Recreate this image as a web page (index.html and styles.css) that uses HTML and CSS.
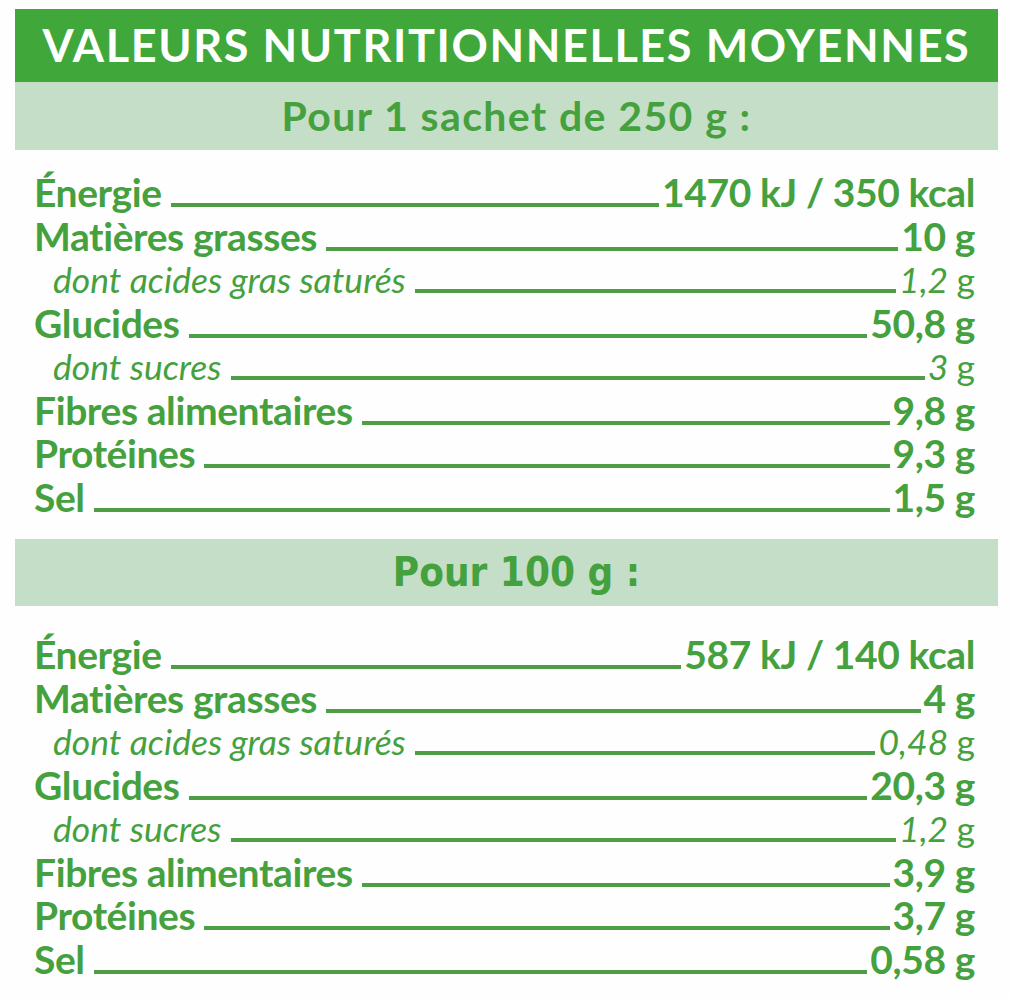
FILE: index.html
```html
<!DOCTYPE html>
<html lang="fr">
<head>
<meta charset="utf-8">
<title>Valeurs nutritionnelles moyennes</title>
<link rel="stylesheet" href="styles.css">
</head>
<body>
<div class="label">
  <div class="title">VALEURS NUTRITIONNELLES MOYENNES</div>
  <div class="band band-first">Pour 1 sachet de 250 g :</div>
  <div class="rows rows-first">
    <div class="row main"><span class="name">Énergie</span><span class="leader"></span><span class="val">1470 kJ / 350 kcal</span></div>
    <div class="row main"><span class="name">Matières grasses</span><span class="leader"></span><span class="val">10 g</span></div>
    <div class="row sub"><span class="name">dont acides gras saturés</span><span class="leader"></span><span class="val">1,2 <span class="u">g</span></span></div>
    <div class="row main"><span class="name">Glucides</span><span class="leader"></span><span class="val">50,8 g</span></div>
    <div class="row sub"><span class="name">dont sucres</span><span class="leader"></span><span class="val">3 <span class="u">g</span></span></div>
    <div class="row main"><span class="name">Fibres alimentaires</span><span class="leader"></span><span class="val">9,8 g</span></div>
    <div class="row main"><span class="name">Protéines</span><span class="leader"></span><span class="val">9,3 g</span></div>
    <div class="row main"><span class="name">Sel</span><span class="leader"></span><span class="val">1,5 g</span></div>
  </div>
  <div class="band band-second">Pour 100 g :</div>
  <div class="rows rows-second">
    <div class="row main"><span class="name">Énergie</span><span class="leader"></span><span class="val">587 kJ / 140 kcal</span></div>
    <div class="row main"><span class="name">Matières grasses</span><span class="leader"></span><span class="val">4 g</span></div>
    <div class="row sub"><span class="name">dont acides gras saturés</span><span class="leader"></span><span class="val">0,48 <span class="u">g</span></span></div>
    <div class="row main"><span class="name">Glucides</span><span class="leader"></span><span class="val">20,3 g</span></div>
    <div class="row sub"><span class="name">dont sucres</span><span class="leader"></span><span class="val">1,2 <span class="u">g</span></span></div>
    <div class="row main"><span class="name">Fibres alimentaires</span><span class="leader"></span><span class="val">3,9 g</span></div>
    <div class="row main"><span class="name">Protéines</span><span class="leader"></span><span class="val">3,7 g</span></div>
    <div class="row main"><span class="name">Sel</span><span class="leader"></span><span class="val">0,58 g</span></div>
  </div>
</div>
</body>
</html>
```
FILE: styles.css
```css
html, body {
  margin: 0;
  padding: 0;
  background: #fefefe;
}
body {
  width: 1010px;
  height: 998px;
  overflow: hidden;
  font-family: Lato, "Open Sans", sans-serif;
  color: #45a13e;
}
.label {
  margin: 9px 12px 0 15px;
  width: 983px;
}
.title {
  height: 73px;
  background: #40a83a;
  color: #ffffff;
  font-weight: 700;
  font-size: 45px;
  letter-spacing: 1.6px;
  line-height: 73px;
  text-align: center;
  white-space: nowrap;
}
.band {
  background: #c5dec7;
  text-align: center;
  font-weight: 700;
  white-space: nowrap;
}
.band-first {
  height: 68px;
  line-height: 68px;
  font-size: 41px;
  letter-spacing: 1.4px;
  padding-left: 20px;
}
.band-second {
  height: 67px;
  line-height: 67px;
  font-size: 40px;
  font-family: "DejaVu Sans Condensed", "DejaVu Sans", sans-serif;
  font-stretch: condensed;
  padding-left: 20px;
  margin-top: 20px;
}
.rows {
  padding: 0 23px 0 19px;
}
.rows-first {
  padding-top: 21px;
}
.rows-second {
  padding-top: 27px;
}
.row {
  display: flex;
  align-items: baseline;
  height: 43.5px;
  line-height: 43.5px;
  white-space: nowrap;
}
.main {
  font-size: 39px;
  font-weight: 700;
  letter-spacing: -0.4px;
}
.sub {
  font-size: 35.5px;
  font-weight: 400;
  font-style: italic;
  padding-left: 19px;
}
.sub .u {
  font-style: normal;
}
.leader {
  flex: 1;
  height: 4px;
  margin: 0 3px 1px 9px;
  background: #4d9e47;
}
.val {
  text-align: right;
}
```
